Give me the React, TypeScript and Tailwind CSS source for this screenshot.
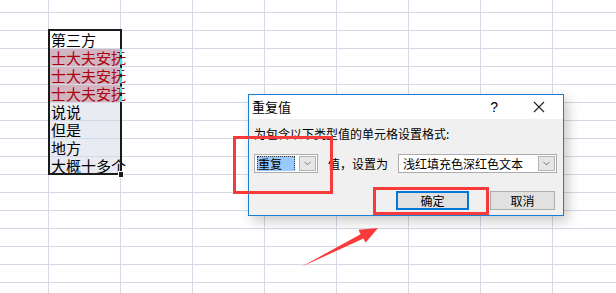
import { ChevronDown } from 'lucide-react';

const colWidths = [49, 72, 72, 72, 72, 72, 72, 72, 72];
const rowHeights = [13, 18, 18, 18, 18, 18, 18, 18, 18, 18, 18, 18, 18, 18, 18, 18, 18];

const cellData: Record<number, { text: string; kind: 'active' | 'dup' | 'sel' }> = {
  2: { text: '第三方', kind: 'active' },
  3: { text: '士大夫安抚', kind: 'dup' },
  4: { text: '士大夫安抚', kind: 'dup' },
  5: { text: '士大夫安抚', kind: 'dup' },
  6: { text: '说说', kind: 'sel' },
  7: { text: '但是', kind: 'sel' },
  8: { text: '地方', kind: 'sel' },
  9: { text: '大概十多个', kind: 'sel' },
};

const Combo = ({ width, children }: { width: string; children: React.ReactNode }) => (
  <div className={`flex h-[19px] ${width} border border-[#acacac] bg-white p-[1px]`}>
    <div className="flex flex-1 items-center overflow-hidden">{children}</div>
    <div className="flex w-[17px] items-center justify-center border border-[#b4b4b4] bg-[#e6e6e6]">
      <ChevronDown size={11} strokeWidth={1.5} className="text-[#444]" />
    </div>
  </div>
);

const App = () => {
  return (
    <div
      className="relative h-[293px] w-[616px] overflow-hidden bg-white"
      style={{ fontFamily: '"Noto Sans CJK SC", "Liberation Sans", sans-serif' }}
    >
      {/* sheet grid */}
      <div className="flex flex-col">
        {rowHeights.map((h, r) => (
          <div key={r} className="flex" style={{ height: h }}>
            {colWidths.map((w, c) => {
              const cell = c === 1 ? cellData[r] : undefined;
              let bg = '';
              let color = 'text-black';
              if (cell?.kind === 'dup') {
                bg = 'bg-[#d1b6c2]';
                color = 'text-[#a8000c]';
              } else if (cell?.kind === 'sel') {
                bg = 'bg-[#e9ebf3]';
              }
              return (
                <div
                  key={c}
                  className={`relative shrink-0 border-b border-r border-[#d5d9e6] ${bg}`}
                  style={{ width: w }}
                >
                  {cell && (
                    <div
                      className={`absolute left-[2px] top-[0px] h-[17px] whitespace-nowrap text-[15px] leading-[17px] ${color}`}
                    >
                      {cell.text}
                    </div>
                  )}
                </div>
              );
            })}
          </div>
        ))}
      </div>

      {/* selection border */}
      <div className="absolute left-[48px] top-[29px] h-[146px] w-[74px] border-2 border-[#1b1b1b]" />
      <div className="absolute left-[120px] top-[49px] h-[53px] w-[2px] border-l-2 border-dashed border-[#3fe0e0]" />
      <div className="absolute left-[118px] top-[171px] h-[7px] w-[6px] bg-[#1b1b1b] border border-white" />

      {/* dialog */}
      <div className="absolute left-[248px] top-[94px] flex h-[122px] w-[316px] flex-col border border-[#1a7fd4] bg-[#f0f0f0] text-[12px] text-black shadow-[4px_5px_12px_rgba(0,0,0,0.22)]">
        <div className="flex h-[24px] items-center bg-white pl-[3px]">
          <span className="flex-1 text-[13px]">重复值</span>
          <span className="mr-[35px] text-[14px]" style={{ fontFamily: '"Liberation Sans", sans-serif' }}>
            ?
          </span>
          <svg width="12" height="12" viewBox="0 0 12 12" className="mr-[18px]">
            <path d="M1 1 L11 11 M11 1 L1 11" stroke="#222" strokeWidth="1.1" />
          </svg>
        </div>
        <div className="flex flex-1 flex-col px-[5px]">
          <div className="mt-[6px] leading-[18px]">为包含以下类型值的单元格设置格式:</div>
          <div className="mt-[11px] flex items-center">
            <Combo width="w-[64px]">
              <span className="ml-[1px] border border-dotted border-[#333] bg-[#99c9ff] pr-[12px] leading-[14px]">
                重复
              </span>
            </Combo>
            <span className="ml-[10px] w-[70px]">值，设置为</span>
            <Combo width="w-[159px]">
              <span className="pl-[3px]">浅红填充色深红色文本</span>
            </Combo>
          </div>
          <div className="mt-[18px] flex justify-end gap-[21px] pr-[3px]">
            <button className="h-[19px] w-[73px] border-2 border-[#0078d7] bg-[#e1e1e1] text-[12px] leading-none">
              确定
            </button>
            <button className="h-[19px] w-[65px] border border-[#adadad] bg-[#e1e1e1] text-[12px] leading-none">
              取消
            </button>
          </div>
        </div>
      </div>

      {/* annotations */}
      <div className="absolute left-[233px] top-[136px] h-[58px] w-[100px] border-[3px] border-[#f93a3a]" />
      <div className="absolute left-[373px] top-[187px] h-[28px] w-[116px] border-[3px] border-[#f93a3a]" />
      <svg className="absolute left-0 top-0" width="616" height="293">
        <polygon
          points="301,267 363.5,238.5 365.5,242.8 378,228 358.5,229.8 360.6,234.2 301,267"
          fill="#f93a3a"
        />
      </svg>
    </div>
  );
};

export default App;
